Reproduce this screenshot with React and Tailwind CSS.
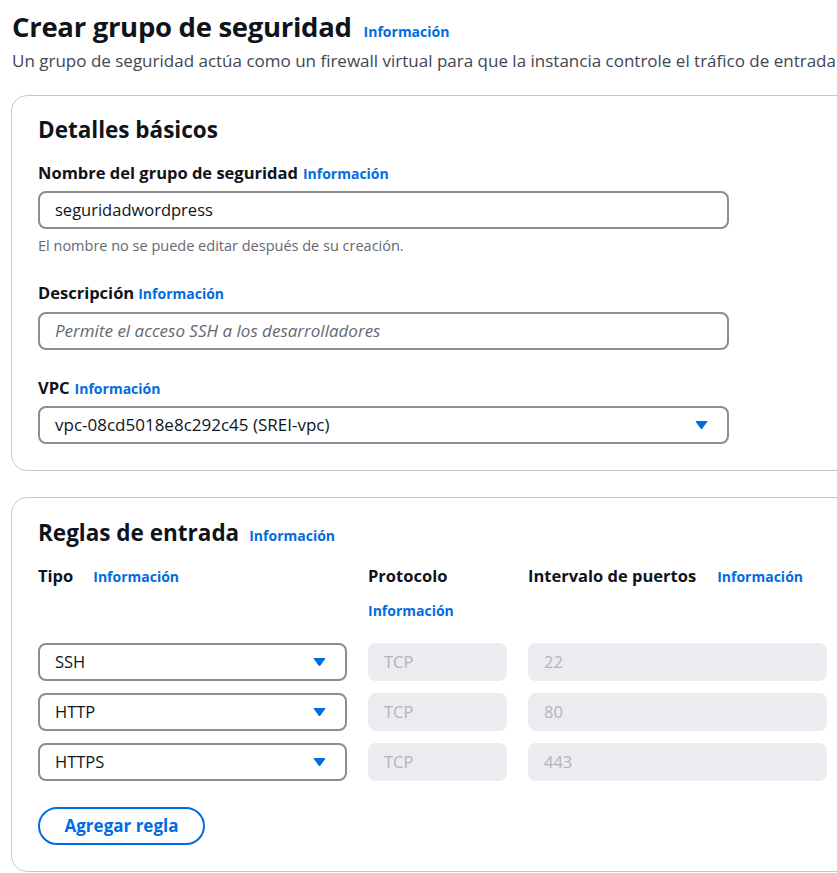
import React from 'react';

const Info = ({ className = '' }) => (
    <a className={`text-[14px] leading-[22px] font-bold text-[#006ce0] whitespace-nowrap ${className}`}>Información</a>
);

const Label = ({ children }) => (
    <span className="text-[16.5px] leading-[22px] font-bold text-[#0f141a] whitespace-nowrap">{children}</span>
);

const Caret = () => (
    <svg width="13" height="10" viewBox="0 0 13 10" className="shrink-0">
        <path d="M1 1.5 L12 1.5 L6.5 9 Z" fill="#006ce0" stroke="#006ce0" strokeWidth="1" strokeLinejoin="round" />
    </svg>
);

const Select = ({ value, className = '', textClass = 'text-[16.5px]' }) => (
    <div className={`h-[38px] flex items-center justify-between pl-[15px] pr-[19px] border-2 border-[#8c8c94] rounded-[8px] bg-white text-[#0f141a] ${className}`}>
        <span className={textClass}>{value}</span>
        <Caret />
    </div>
);

const Disabled = ({ value, className = '' }) => (
    <div className={`h-[38px] flex items-center pl-[16px] rounded-[8px] bg-[#ebebf0] text-[16.5px] text-[#b4b4bb] ${className}`}>
        {value}
    </div>
);

const rules = [
    { type: 'SSH', port: '22' },
    { type: 'HTTP', port: '80' },
    { type: 'HTTPS', port: '443' },
];

export default function App() {
    return (
        <div className="w-[837px] h-[873px] overflow-hidden bg-white" style={{ fontFamily: '"Open Sans", "Noto Sans", sans-serif' }}>
            <div className="w-[1000px] pl-[11px] pt-[9px]">
                {/* Header */}
                <div className="flex items-baseline gap-[12px] pl-[1px]">
                    <h1 className="text-[27.5px] leading-[36px] font-bold text-[#0f141a] tracking-[-0.3px]">Crear grupo de seguridad</h1>
                    <Info />
                </div>
                <p className="pl-[1px] mt-[4px] text-[17px] leading-[24px] text-[#424650] whitespace-nowrap">
                    Un grupo de seguridad actúa como un firewall virtual para que la instancia controle el tráfico de entrada
                </p>

                {/* Detalles básicos */}
                <div className="mt-[22px] border border-[#c6c6cd] rounded-[16px] pl-[26px] pt-[19px] pb-[26px]">
                    <h2 className="text-[22.5px] leading-[30px] font-bold text-[#0f141a]">Detalles básicos</h2>

                    <div className="mt-[17px] flex items-baseline gap-[5px]">
                        <Label>Nombre del grupo de seguridad</Label>
                        <Info />
                    </div>
                    <div className="mt-[6px] w-[691px] h-[38px] flex items-center pl-[15px] border-2 border-[#8c8c94] rounded-[8px] text-[16.5px] text-[#0f141a]">
                        seguridadwordpress
                    </div>
                    <p className="mt-[7px] text-[14.5px] leading-[20px] text-[#656871]">El nombre no se puede editar después de su creación.</p>

                    <div className="mt-[26px] flex items-baseline gap-[4px]">
                        <Label>Descripción</Label>
                        <Info />
                    </div>
                    <div className="mt-[7px] w-[691px] h-[38px] flex items-center pl-[15px] border-2 border-[#8c8c94] rounded-[8px] text-[17px] italic text-[#656871]">
                        Permite el acceso SSH a los desarrolladores
                    </div>

                    <div className="mt-[27px] flex items-baseline gap-[5px]">
                        <Label>VPC</Label>
                        <Info />
                    </div>
                    <Select value="vpc-08cd5018e8c292c45 (SREI-vpc)" textClass="text-[17px]" className="mt-[6px] w-[691px]" />
                </div>

                {/* Reglas de entrada */}
                <div className="mt-[26px] border border-[#c6c6cd] rounded-[16px] pl-[26px] pt-[20px] pb-[26px]">
                    <div className="flex items-baseline gap-[10px]">
                        <h2 className="text-[22.5px] leading-[30px] font-bold text-[#0f141a]">Reglas de entrada</h2>
                        <Info />
                    </div>

                    <div className="mt-[17px] flex gap-[21px]">
                        <div className="w-[309px] flex items-baseline gap-[20px]">
                            <Label>Tipo</Label>
                            <Info />
                        </div>
                        <div className="w-[139px] flex flex-col items-start">
                            <Label>Protocolo</Label>
                            <Info className="mt-[13px]" />
                        </div>
                        <div className="w-[299px] flex items-baseline gap-[21px]">
                            <Label>Intervalo de puertos</Label>
                            <Info />
                        </div>
                    </div>

                    <div className="mt-[21px] flex flex-col gap-[12px]">
                        {rules.map((r) => (
                            <div key={r.type} className="flex gap-[21px]">
                                <Select value={r.type} className="w-[309px]" />
                                <Disabled value="TCP" className="w-[139px]" />
                                <Disabled value={r.port} className="w-[299px]" />
                            </div>
                        ))}
                    </div>

                    <button className="mt-[26px] h-[38px] w-[167px] rounded-full border-2 border-[#006ce0] text-[17px] font-bold text-[#006ce0]">
                        Agregar regla
                    </button>
                </div>
            </div>
        </div>
    );
}
